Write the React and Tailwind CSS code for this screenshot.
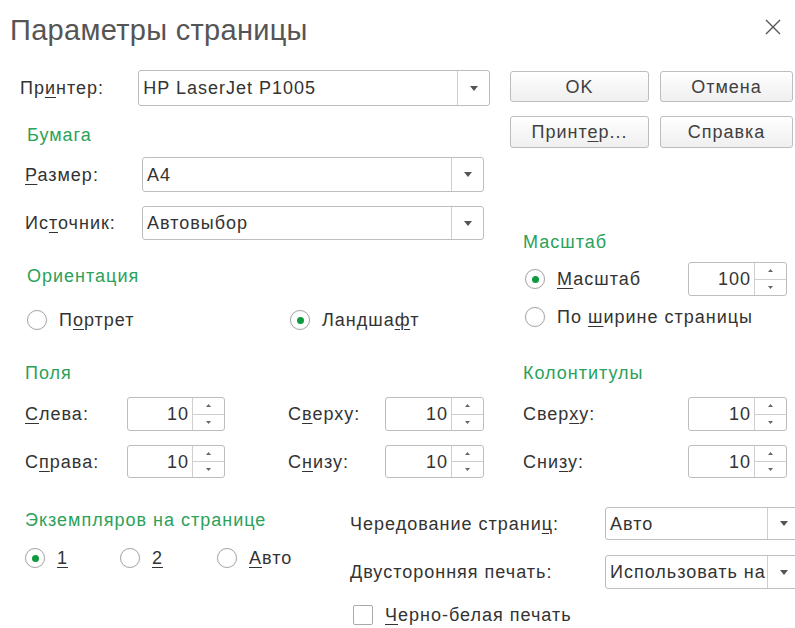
import { useState } from "react";

const green = "text-[#2ba15a]";

function Key({ children }) {
  return <u className="underline underline-offset-[3px] decoration-1">{children}</u>;
}

function Arrow() {
  return (
    <svg width="8" height="5" viewBox="0 0 8 5">
      <path d="M0 0h8L4 5z" fill="#555" />
    </svg>
  );
}

function Combo({ value, className = "" }) {
  return (
    <div className={`flex bg-white border border-[#bdbdbd] rounded-[3px] overflow-hidden ${className}`}>
      <div className="flex-1 flex items-center pl-[4px] whitespace-nowrap overflow-hidden text-[#333]">{value}</div>
      <div className="w-[32px] shrink-0 border-l border-[#cfcfcf] flex items-center justify-center">
        <Arrow />
      </div>
    </div>
  );
}

function Spin({ value, className = "" }) {
  return (
    <div className={`flex bg-white border border-[#bdbdbd] rounded-[3px] overflow-hidden ${className}`}>
      <div className="flex-1 flex items-center justify-end pr-[3px] text-[#333]">{value}</div>
      <div className="w-[32px] shrink-0 border-l border-[#cfcfcf] flex flex-col">
        <div className="flex-1 flex items-center justify-center">
          <svg width="5" height="3" viewBox="0 0 5 3"><path d="M0 3h5L2.5 0z" fill="#666" /></svg>
        </div>
        <div className="h-px bg-[#cfcfcf]" />
        <div className="flex-1 flex items-center justify-center">
          <svg width="5" height="3" viewBox="0 0 5 3"><path d="M0 0h5L2.5 3z" fill="#666" /></svg>
        </div>
      </div>
    </div>
  );
}

function Radio({ checked, onClick, children, className = "" }) {
  return (
    <div className={`flex items-center h-[24px] cursor-default ${className}`} onClick={onClick}>
      <span className="w-[20px] h-[20px] shrink-0 rounded-full border border-[#a9a9a9] bg-white flex items-center justify-center shadow-[0_0_1px_rgba(0,0,0,0.15)]">
        {checked && <span className="w-[7px] h-[7px] rounded-full bg-[#0f9a3e]" />}
      </span>
      <span className="ml-[12px] text-[#333] whitespace-nowrap">{children}</span>
    </div>
  );
}

function Btn({ children, className = "" }) {
  return (
    <button className={`border border-[#bdbdbd] rounded-[3px] bg-gradient-to-b from-white to-[#efefef] text-[#404040] ${className}`}>
      {children}
    </button>
  );
}

export default function App() {
  const [orient, setOrient] = useState("land");
  const [scale, setScale] = useState("scale");
  const [copies, setCopies] = useState("1");
  const [bw, setBw] = useState(false);

  return (
    <div className="w-[795px] h-[628px] overflow-hidden bg-white text-[18px] tracking-[1px] leading-none text-[#404040] font-['Liberation_Sans',Arial,sans-serif]">
      {/* Header */}
      <div className="h-[58px] flex items-center justify-between pl-[10px] pr-[14px]">
        <div className="text-[29px] tracking-[0.3px] text-[#555] pt-[2px]">Параметры страницы</div>
        <svg width="16" height="16" viewBox="0 0 16 16" className="mb-[4px]">
          <path d="M1 1l14 14M15 1L1 15" stroke="#555" strokeWidth="1.4" />
        </svg>
      </div>

      {/* Printer, paper, orientation / buttons, scale */}
      <div className="flex mt-[12px]">
        <div className="w-[490px] shrink-0 pl-[20px]">
          <div className="flex items-center h-[36px]">
            <span className="w-[120px] text-[#333]">Пр<Key>и</Key>нтер:</span>
            <Combo value="HP LaserJet P1005" className="w-[357px] h-[36px]" />
          </div>
          <div className={`mt-[16px] h-[26px] flex items-center pl-[7px] ${green}`}>Бумага</div>
          <div className="mt-[9px] flex items-center pl-[5px] h-[35px]">
            <span className="w-[117px] text-[#333]"><Key>Р</Key>азмер:</span>
            <Combo value="A4" className="w-[342px] h-[35px]" />
          </div>
          <div className="mt-[14px] flex items-center pl-[5px] h-[34px]">
            <span className="w-[117px] text-[#333]">Ис<Key>т</Key>очник:</span>
            <Combo value="Автовыбор" className="w-[342px] h-[34px]" />
          </div>
          <div className={`mt-[23px] h-[26px] flex items-center pl-[7px] ${green}`}>Ориентация</div>
          <div className="mt-[19px] flex pl-[7px]">
            <Radio checked={orient === "port"} onClick={() => setOrient("port")} className="w-[263px]">
              П<Key>о</Key>ртрет
            </Radio>
            <Radio checked={orient === "land"} onClick={() => setOrient("land")}>
              Ландша<Key>ф</Key>т
            </Radio>
          </div>
        </div>

        <div className="pl-[20px] flex-1">
          <div className="flex gap-[11px]">
            <Btn className="w-[139px] h-[31px] mt-[1px] shrink-0">OK</Btn>
            <Btn className="w-[133px] h-[31px] mt-[1px] shrink-0">Отмена</Btn>
          </div>
          <div className="flex gap-[11px] mt-[14px]">
            <Btn className="w-[139px] h-[32px] shrink-0">Принт<Key>е</Key>р...</Btn>
            <Btn className="w-[133px] h-[32px] shrink-0">Справка</Btn>
          </div>
          <div className={`mt-[81px] h-[26px] flex items-center pl-[13px] ${green}`}>Масштаб</div>
          <div className="mt-[7px] flex items-center h-[34px] pl-[15px]">
            <Radio checked={scale === "scale"} onClick={() => setScale("scale")} className="w-[163px]">
              <Key>М</Key>асштаб
            </Radio>
            <Spin value="100" className="w-[99px] h-[34px]" />
          </div>
          <div className="mt-[9px] pl-[15px]">
            <Radio checked={scale === "width"} onClick={() => setScale("width")}>
              По <Key>ш</Key>ирине страницы
            </Radio>
          </div>
        </div>
      </div>

      {/* Margins and headers/footers */}
      <div className="flex mt-[28px] pl-[25px]">
        <div className={`w-[498px] h-[26px] flex items-center ${green}`}>Поля</div>
        <div className={`h-[26px] flex items-center ${green}`}>Колонтитулы</div>
      </div>
      <div className="flex items-center mt-[11px] pl-[25px] h-[34px]">
        <span className="w-[102px] text-[#333]"><Key>С</Key>лева:</span>
        <Spin value="10" className="w-[98px] h-[34px]" />
        <span className="ml-[63px] w-[97px] text-[#333]">С<Key>в</Key>ерху:</span>
        <Spin value="10" className="w-[99px] h-[34px]" />
        <span className="ml-[39px] w-[165px] text-[#333]">Свер<Key>х</Key>у:</span>
        <Spin value="10" className="w-[99px] h-[34px]" />
      </div>
      <div className="flex items-center mt-[14px] pl-[25px] h-[33px]">
        <span className="w-[102px] text-[#333]">С<Key>п</Key>рава:</span>
        <Spin value="10" className="w-[98px] h-[33px]" />
        <span className="ml-[63px] w-[97px] text-[#333]">С<Key>н</Key>изу:</span>
        <Spin value="10" className="w-[99px] h-[33px]" />
        <span className="ml-[39px] w-[165px] text-[#333]">Сни<Key>з</Key>у:</span>
        <Spin value="10" className="w-[99px] h-[33px]" />
      </div>

      {/* Copies per page, duplex, black & white */}
      <div className="flex mt-[29px]">
        <div className="w-[350px] shrink-0 pl-[25px]">
          <div className={`h-[26px] flex items-center ${green}`}>Экземпляров на странице</div>
          <div className="mt-[13px] flex">
            <Radio checked={copies === "1"} onClick={() => setCopies("1")} className="w-[95px]">
              <Key>1</Key>
            </Radio>
            <Radio checked={copies === "2"} onClick={() => setCopies("2")} className="w-[97px]">
              <Key>2</Key>
            </Radio>
            <Radio checked={copies === "auto"} onClick={() => setCopies("auto")}>
              <Key>А</Key>вто
            </Radio>
          </div>
        </div>
        <div className="flex-1">
          <div className="flex items-center h-[33px]">
            <span className="w-[255px] shrink-0 text-[#333]">Чередование страни<Key>ц</Key>:</span>
            <Combo value="Авто" className="w-[195px] h-[33px] shrink-0" />
          </div>
          <div className="flex items-center h-[34px] mt-[15px]">
            <span className="w-[255px] shrink-0 text-[#333]">Двусторонняя печать:</span>
            <Combo value="Использовать на" className="w-[195px] h-[34px] shrink-0" />
          </div>
          <div className="flex items-center mt-[16px] pl-[3px] cursor-default" onClick={() => setBw(!bw)}>
            <span className="w-[20px] h-[20px] border border-[#a9a9a9] rounded-[2px] bg-white flex items-center justify-center">
              {bw && (
                <svg width="12" height="10" viewBox="0 0 12 10"><path d="M1 5l3 3 7-7" stroke="#0f9a3e" strokeWidth="2" fill="none" /></svg>
              )}
            </span>
            <span className="ml-[12px] text-[#333]"><Key>Ч</Key>ерно-белая печать</span>
          </div>
        </div>
      </div>
    </div>
  );
}
